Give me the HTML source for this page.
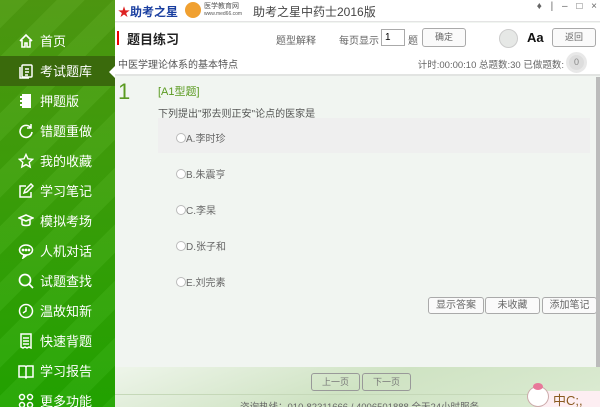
<!DOCTYPE html>
<html><head><meta charset="utf-8"><style>
*{margin:0;padding:0;box-sizing:border-box}
body{width:600px;height:407px;overflow:hidden;position:relative;font-family:"Liberation Sans","Noto Sans CJK SC",sans-serif;background:#f1f5f1;color:#555}
.side{position:absolute;left:0;top:0;width:115px;height:407px;background:linear-gradient(180deg,#4e9a10 0%,#3fa00a 40%,#22a600 100%);overflow:hidden}
.side .it{position:absolute;left:0;width:115px;height:30px;color:#fff;font-size:13px;line-height:31px;padding-left:40px}
.side .it svg{position:absolute;left:18px;top:7px}
.side .sel{background:#3a6a0c}
.arrow{position:absolute;left:109px;top:66px;width:0;height:0;border-top:6px solid transparent;border-bottom:6px solid transparent;border-right:6px solid #fff}
.top{position:absolute;left:115px;top:0;width:485px;height:22px;background:#fff;border-bottom:1px solid #e4e4e4;overflow:hidden}
.hdr{position:absolute;left:115px;top:23px;width:485px;height:30px;background:#fff}
.sub{position:absolute;left:115px;top:53px;width:485px;height:23px;background:#fff;border-bottom:2px solid #e2e4e2}
.btn{position:absolute;border:1px solid #aaa;border-radius:3px;background:#fafafa;font-size:9px;color:#666;text-align:center}
.opt{position:absolute;left:176px;font-size:10px;color:#666}
.opt i{display:inline-block;width:10px;height:10px;border-radius:50%;border:1px solid #bbb;background:#fff;vertical-align:-1px;margin-right:0}
.foot{position:absolute;left:115px;top:367px;width:485px;height:40px;background:linear-gradient(160deg,#eef5ea,#cfe3c3 50%,#dcebd3);overflow:hidden}
</style></head><body>
<div class="side">
<div style="position:absolute;left:0;top:0;width:115px;height:407px;background:repeating-linear-gradient(135deg,rgba(255,255,255,0.04) 0 20px,rgba(0,0,0,0.03) 20px 40px)"></div>
<div class="it" style="top:26px"><svg width="16" height="16" viewBox="0 0 16 16" fill="none" stroke="#fff" stroke-width="1.6"><path d="M2 8L8 2l6 6M4 7v7h3v-4h2v4h3V7"/></svg>首页</div>
<div class="it sel" style="top:56px"><svg width="16" height="16" viewBox="0 0 16 16" fill="none" stroke="#fff" stroke-width="1.5"><rect x="4" y="2" width="10" height="12" rx="1"/><path d="M2 4v11h9M7 6h4M7 9h4M7 12h3"/></svg>考试题库</div>
<div class="it" style="top:86px"><svg width="16" height="16" viewBox="0 0 16 16" fill="#fff"><rect x="4" y="1" width="9" height="14"/><rect x="2" y="3" width="3" height="2"/><rect x="2" y="7" width="3" height="2"/><rect x="2" y="11" width="3" height="2"/></svg>押题版</div>
<div class="it" style="top:116px"><svg width="16" height="16" viewBox="0 0 16 16" fill="none" stroke="#fff" stroke-width="1.6"><path d="M13 5A6 6 0 1 0 14 9M13 1v4H9"/></svg>错题重做</div>
<div class="it" style="top:146px"><svg width="16" height="16" viewBox="0 0 16 16" fill="none" stroke="#fff" stroke-width="1.4"><path d="M8 1.5l2 4.3 4.6.5-3.4 3.1 1 4.6L8 11.6 3.8 14l1-4.6L1.4 6.3 6 5.8z"/></svg>我的收藏</div>
<div class="it" style="top:176px"><svg width="16" height="16" viewBox="0 0 16 16" fill="none" stroke="#fff" stroke-width="1.5"><path d="M13 9v5H2V3h6M6 10l1-3 6-6 2 2-6 6z"/></svg>学习笔记</div>
<div class="it" style="top:206px"><svg width="16" height="16" viewBox="0 0 16 16" fill="none" stroke="#fff" stroke-width="1.5"><path d="M1 5l7-3 7 3-7 3zM4 7v4c0 2 8 2 8 0V7"/></svg>模拟考场</div>
<div class="it" style="top:236px"><svg width="16" height="16" viewBox="0 0 16 16" fill="none" stroke="#fff" stroke-width="1.5"><ellipse cx="8" cy="7" rx="6.5" ry="5"/><path d="M6 12l-1 3 4-3"/><circle cx="5" cy="7" r=".6"/><circle cx="8" cy="7" r=".6"/><circle cx="11" cy="7" r=".6"/></svg>人机对话</div>
<div class="it" style="top:266px"><svg width="16" height="16" viewBox="0 0 16 16" fill="none" stroke="#fff" stroke-width="1.7"><circle cx="7" cy="7" r="5.5"/><path d="M11 11l4 4"/></svg>试题查找</div>
<div class="it" style="top:296px"><svg width="16" height="16" viewBox="0 0 16 16" fill="none" stroke="#fff" stroke-width="1.5"><circle cx="8" cy="8" r="6.5"/><path d="M8 4v4l-3 2"/></svg>温故知新</div>
<div class="it" style="top:326px"><svg width="16" height="16" viewBox="0 0 16 16" fill="none" stroke="#fff" stroke-width="1.5"><path d="M3 1h10v14l-2-1-2 1-2-1-2 1-2-1zM5 5h6M5 8h6M5 11h6"/></svg>快速背题</div>
<div class="it" style="top:356px"><svg width="16" height="16" viewBox="0 0 16 16" fill="none" stroke="#fff" stroke-width="1.5"><path d="M1 3h6l1 1 1-1h6v11H9l-1 1-1-1H1zM8 4v11"/></svg>学习报告</div>
<div class="it" style="top:386px;height:21px;overflow:hidden"><svg width="16" height="16" viewBox="0 0 16 16" fill="none" stroke="#fff" stroke-width="1.5"><circle cx="4" cy="4" r="2.5"/><circle cx="12" cy="4" r="2.5"/><circle cx="4" cy="12" r="2.5"/><circle cx="12" cy="12" r="2.5"/></svg>更多功能</div>
<div class="arrow"></div>
</div>
<div class="top">
<div style="position:absolute;left:3px;top:3px;font-size:12px;color:#1a3fa0;font-weight:bold"><span style="color:#d22">★</span>助考之星</div>
<div style="position:absolute;left:70px;top:2px;width:16px;height:16px;border-radius:50%;background:#f0a030"></div>
<div style="position:absolute;left:89px;top:3px;font-size:7px;color:#555;line-height:7px">医学教育网<br><span style="font-size:5px">www.med66.com</span></div>
<div style="position:absolute;left:138px;top:3px;font-size:12px;color:#444">助考之星中药士2016版</div>
<div style="position:absolute;left:415px;top:1px;width:70px;text-align:right;font-size:10px;color:#666;white-space:nowrap;letter-spacing:3px">♦ | – □ ×</div>
</div>
<div class="hdr">
<div style="position:absolute;left:2px;top:8px;width:2px;height:14px;background:#e00"></div>
<div style="position:absolute;left:12px;top:6px;font-size:13px;font-weight:bold;color:#222">题目练习</div>
<div style="position:absolute;left:161px;top:9px;font-size:10px;color:#666">题型解释</div>
<div style="position:absolute;left:224px;top:9px;font-size:10px;color:#666">每页显示</div>
<div style="position:absolute;left:266px;top:6px;width:24px;height:17px;border:1px solid #aaa;background:#fff;font-size:10px;color:#000;padding:2px 3px">1</div>
<div style="position:absolute;left:293px;top:9px;font-size:10px;color:#666">题</div>
<div class="btn" style="left:307px;top:5px;width:44px;height:19px;line-height:17px">确定</div>
<div style="position:absolute;left:384px;top:6px;width:19px;height:19px;border-radius:50%;background:#e6e8e6;border:1px solid #ccc"></div>
<div style="position:absolute;left:412px;top:7px;font-size:13px;color:#111;font-weight:bold">Aa</div>
<div class="btn" style="left:437px;top:5px;width:44px;height:19px;line-height:17px">返回</div>
</div>
<div class="sub">
<div style="position:absolute;left:3px;top:3px;font-size:10px;color:#555">中医学理论体系的基本特点</div>
<div style="position:absolute;right:36px;top:4px;font-size:9.5px;color:#666;white-space:nowrap">计时:00:00:10 总题数:30 已做题数:</div>
<div style="position:absolute;left:451px;top:-1px;width:21px;height:21px;border-radius:50%;background:#ddd;border:3px solid #e8e8e8;font-size:9px;text-align:center;line-height:15px;color:#888">0</div>
</div>
<div style="position:absolute;left:118px;top:79px;font-size:22px;color:#5a9a20">1</div>
<div style="position:absolute;left:158px;top:83px;font-size:11px;color:#5a9a20">[A1型题]</div>
<div style="position:absolute;left:158px;top:105px;font-size:10px;color:#555">下列提出"邪去则正安"论点的医家是</div>
<div style="position:absolute;left:158px;top:118px;width:432px;height:35px;background:#efefef"></div>
<div class="opt" style="top:130px"><i></i>A.李时珍</div>
<div class="opt" style="top:166px"><i></i>B.朱震亨</div>
<div class="opt" style="top:202px"><i></i>C.李杲</div>
<div class="opt" style="top:238px"><i></i>D.张子和</div>
<div class="opt" style="top:274px"><i></i>E.刘完素</div>
<div class="btn" style="left:428px;top:297px;width:56px;height:17px;line-height:15px;font-size:10px">显示答案</div>
<div class="btn" style="left:485px;top:297px;width:55px;height:17px;line-height:15px;font-size:10px">未收藏</div>
<div class="btn" style="left:542px;top:297px;width:55px;height:17px;line-height:15px;font-size:10px">添加笔记</div>
<div style="position:absolute;left:596px;top:77px;width:4px;height:290px;background:#bbb"></div>
<div class="foot">
<div class="btn" style="left:196px;top:6px;width:49px;height:18px;line-height:16px;background:transparent;border-color:#999;color:#777">上一页</div>
<div class="btn" style="left:247px;top:6px;width:49px;height:18px;line-height:16px;background:transparent;border-color:#999;color:#777">下一页</div>
<div style="position:absolute;left:0;top:27px;width:485px;height:1px;background:#c5d8b8"></div>
<div style="position:absolute;left:125px;top:32px;font-size:9.5px;color:#666;white-space:nowrap">咨询热线：010-82311666 / 4006501888  全天24小时服务</div>
</div>
<div style="position:absolute;left:527px;top:383px;width:73px;height:24px;overflow:hidden">
<div style="position:absolute;left:10px;top:8px;width:63px;height:16px;background:#fdeef2"></div>
<div style="position:absolute;left:0;top:3px;width:22px;height:21px;border-radius:50%;background:#fff;border:1px solid #caa"></div>
<div style="position:absolute;left:6px;top:0;width:10px;height:7px;border-radius:50%;background:#e8789a"></div>
<div style="position:absolute;left:26px;top:7px;font-size:13px;color:#8a5a20;white-space:nowrap">中C;,</div>
</div>
</body></html>
